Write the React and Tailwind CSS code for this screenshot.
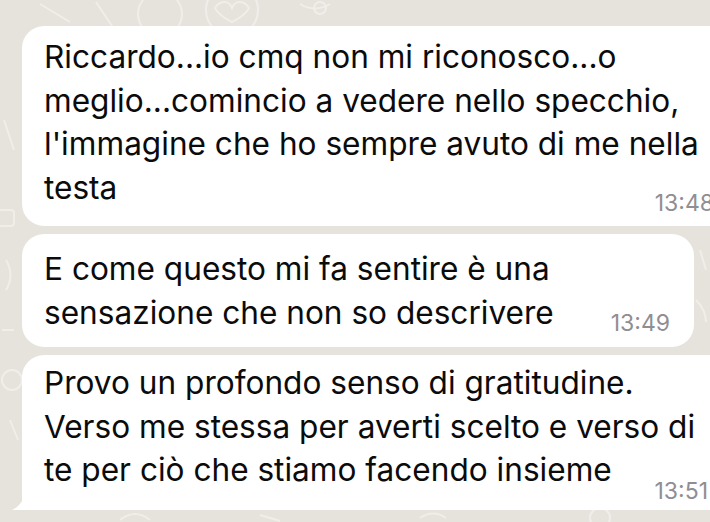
/**
 * App.jsx
 * WhatsApp-style chat excerpt: three incoming message bubbles on a beige
 * doodle background.
 */

const messages = [
  {
    lines: [
      'Riccardo...io cmq non mi riconosco...o',
      'meglio...comincio a vedere nello specchio,',
      "l'immagine che ho sempre avuto di me nella",
      'testa',
    ],
    time: '13:48',
  },
  {
    lines: ['E come questo mi fa sentire è una', 'sensazione che non so descrivere'],
    time: '13:49',
  },
  {
    lines: [
      'Provo un profondo senso di gratitudine.',
      'Verso me stessa per averti scelto e verso di',
      'te per ciò che stiamo facendo insieme',
    ],
    time: '13:51',
  },
];

// Faint doodle wallpaper, drawn as loose strokes
function Wallpaper() {
  return (
    <svg className="absolute inset-0 h-full w-full" viewBox="0 0 710 522" fill="none" stroke="#f1eeea" strokeWidth="2">
      <circle cx="160" cy="14" r="22" />
      <circle cx="232" cy="10" r="26" />
      <path d="M215 8c5-8 14-8 17 0 3-8 12-8 17 0-4 8-17 14-17 14s-13-6-17-14z" />
      <path d="M40 4l30 18M96 2l20 30M300 4c10 6 20 6 30 0" />
      <circle cx="320" cy="8" r="6" />
      <path d="M4 120l10 30M6 260c6 10 6 20 0 30M2 330h12M10 420l8 20" />
      <rect x="-6" y="210" width="20" height="16" rx="3" />
      <circle cx="12" cy="380" r="10" />
      <path d="M120 520c10-8 20-8 30 0M260 515l20 6M420 518c8-6 18-6 26 0" />
      <circle cx="600" cy="518" r="10" />
      <path d="M700 250l6 20M696 300c6 6 10 14 10 22" />
    </svg>
  );
}

/**
 * Body — message lines; the last line shares a row with the timestamp,
 * which hangs a little lower than the text (lastGap sets how much).
 */
function Body({ lines, time, lastGap }) {
  const head = lines.slice(0, -1);
  const last = lines[lines.length - 1];
  return (
    <div className="flex flex-col text-[31.6px] leading-[43.5px] text-[#0b0b0b]">
      {head.map((l, i) => (
        <span key={i} className="whitespace-nowrap">
          {l}
        </span>
      ))}
      <div className="flex items-end justify-between">
        <span className={`whitespace-nowrap ${lastGap}`}>{last}</span>
        <span className="text-[23px] leading-none text-[#8e8e93]">{time}</span>
      </div>
    </div>
  );
}

export default function App() {
  return (
    <div
      className="relative h-[522px] w-[710px] overflow-hidden bg-[#e6e2dc]"
      style={{ fontFamily: 'Inter, "Liberation Sans", sans-serif' }}
    >
      <Wallpaper />
      <div className="relative flex flex-col gap-[8px] pl-[22px] pt-[26px]">
        {/* Message 1 — runs past the right edge */}
        <div className="mr-[-40px] rounded-[22px] bg-white pl-[22px] pr-[36px] pt-[9px] pb-[11px]">
          <Body lines={messages[0].lines} time={messages[0].time} lastGap="mb-[6px]" />
        </div>

        {/* Message 2 */}
        <div className="mr-[16px] rounded-[22px] bg-white pl-[22px] pr-[24px] pt-[13px] pb-[12px]">
          <Body lines={messages[1].lines} time={messages[1].time} lastGap="mb-[1px]" />
        </div>

        {/* Message 3 — with the bubble tail */}
        <div className="relative mr-[-40px]">
          <svg className="absolute bottom-0 left-[-14px]" width="34" height="30" viewBox="0 0 34 30">
            <path d="M34 0v30H4c7-3 12-10 14-20V0z" fill="#ffffff" />
          </svg>
          <div className="relative rounded-[22px] rounded-bl-[6px] bg-white pl-[22px] pr-[42px] pt-[6px] pb-[7px]">
            <Body lines={messages[2].lines} time={messages[2].time} lastGap="mb-[11px]" />
          </div>
        </div>
      </div>
    </div>
  );
}
